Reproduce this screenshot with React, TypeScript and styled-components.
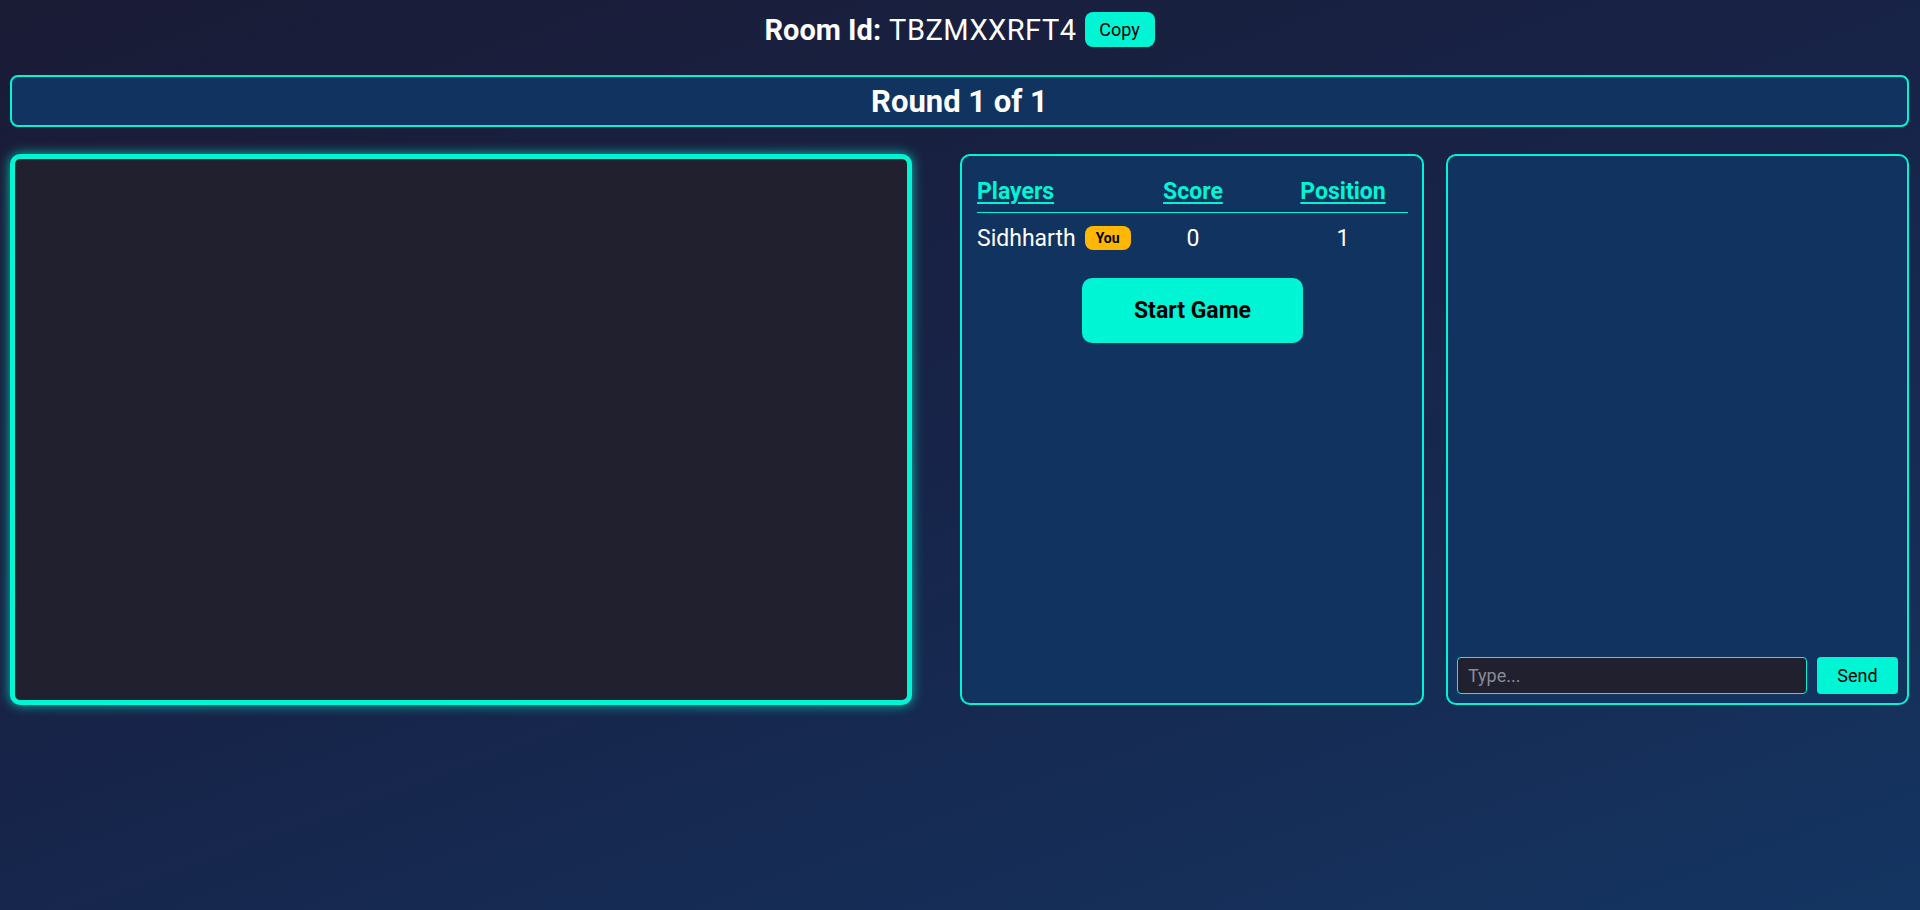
import React from 'react'
import styled, { createGlobalStyle } from 'styled-components'

const cyan = '#00f5d4'
const panelBg = '#10335f'

const GlobalStyle = createGlobalStyle`
  html, body {
    margin: 0;
    padding: 0;
  }
  body {
    min-height: 100vh;
    background: linear-gradient(160deg, #1a1b35 0%, #172449 50%, #143562 100%);
    font-family: Roboto, "Noto Sans", sans-serif;
    color: #fff;
  }
`

const Page = styled.div`
  padding: 0 11px 0 10px;
`

const Header = styled.div`
  display: flex;
  align-items: center;
  justify-content: center;
  gap: 8px;
  padding-top: 12px;
  height: 35px;
`

const RoomLabel = styled.span`
  font-size: 29px;
  font-weight: 700;
`

const RoomId = styled.span`
  font-size: 29px;
  font-weight: 400;
  letter-spacing: 0.5px;
`

const SmallButton = styled.button<{ $w: number; $h: number; $radius: number }>`
  flex: none;
  width: ${({ $w }) => $w}px;
  height: ${({ $h }) => $h}px;
  border-radius: ${({ $radius }) => $radius}px;
  border: none;
  background: ${cyan};
  color: #000;
  font-family: inherit;
  font-size: 18px;
  padding: 0;
  cursor: pointer;
`

const RoundBar = styled.div`
  margin-top: 28px;
  height: 48px;
  border: 2px solid ${cyan};
  border-radius: 8px;
  background: ${panelBg};
  display: flex;
  align-items: center;
  justify-content: center;
  font-size: 31px;
  font-weight: 700;
`

const Main = styled.div`
  margin-top: 27px;
  display: flex;
  height: 551px;
`

const Canvas = styled.div`
  box-sizing: border-box;
  flex: 0 0 902px;
  height: 100%;
  margin-right: 48px;
  border: 5px solid ${cyan};
  border-radius: 10px;
  background: #20202f;
  box-shadow: 0 0 12px rgba(0, 245, 212, 0.75);
`

const Panel = styled.div`
  box-sizing: border-box;
  height: 100%;
  border: 2px solid ${cyan};
  border-radius: 10px;
  background: ${panelBg};
`

const PlayersPanel = styled(Panel)`
  flex: 0 0 464px;
  margin-right: 22px;
  padding: 14px 14px 0 15px;
  display: flex;
  flex-direction: column;
`

const TableRow = styled.div<{ $head?: boolean }>`
  display: grid;
  grid-template-columns: 131px 170px 1fr;
  align-items: center;
  height: ${({ $head }) => ($head ? 42 : 50)}px;
  border-bottom: ${({ $head }) => ($head ? `1px solid ${cyan}` : 'none')};
`

const HeadCell = styled.div<{ $center?: boolean }>`
  color: ${cyan};
  font-size: 23px;
  font-weight: 700;
  text-decoration: underline;
  text-underline-offset: 3px;
  text-align: ${({ $center }) => ($center ? 'center' : 'left')};
`

const Cell = styled.div<{ $center?: boolean }>`
  font-size: 23px;
  display: flex;
  align-items: center;
  gap: 9px;
  white-space: nowrap;
  justify-content: ${({ $center }) => ($center ? 'center' : 'flex-start')};
`

const Badge = styled.span`
  display: inline-flex;
  flex: none;
  align-items: center;
  justify-content: center;
  width: 46px;
  height: 24px;
  border-radius: 8px;
  background: #ffb703;
  color: #000;
  font-size: 14px;
  font-weight: 700;
`

const StartButton = styled.button`
  align-self: center;
  margin-top: 15px;
  width: 221px;
  height: 65px;
  border: none;
  border-radius: 10px;
  background: ${cyan};
  color: #000;
  font-family: inherit;
  font-size: 23px;
  font-weight: 700;
  cursor: pointer;
`

const ChatPanel = styled(Panel)`
  flex: 1;
  display: flex;
  flex-direction: column;
  justify-content: flex-end;
  padding: 9px;
`

const ChatForm = styled.div`
  display: flex;
  gap: 10px;
`

const ChatInput = styled.input`
  flex: 1;
  min-width: 0;
  box-sizing: border-box;
  height: 37px;
  border: 1px solid ${cyan};
  border-radius: 4px;
  background: #20202f;
  color: #fff;
  font-family: inherit;
  font-size: 18px;
  padding: 0 10px;
  outline: none;
  &::placeholder {
    color: #8a8a96;
  }
`

const players = [{ name: 'Sidhharth', score: 0, position: 1, you: true }]

export default function App() {
  return (
    <Page>
      <GlobalStyle />
      <Header>
        <RoomLabel>Room Id:</RoomLabel>
        <RoomId>TBZMXXRFT4</RoomId>
        <SmallButton $w={70} $h={35} $radius={8}>Copy</SmallButton>
      </Header>
      <RoundBar>Round 1 of 1</RoundBar>
      <Main>
        <Canvas />
        <PlayersPanel>
          <TableRow $head>
            <HeadCell>Players</HeadCell>
            <HeadCell $center>Score</HeadCell>
            <HeadCell $center>Position</HeadCell>
          </TableRow>
          {players.map((p) => (
            <TableRow key={p.name}>
              <Cell>
                {p.name}
                {p.you && <Badge>You</Badge>}
              </Cell>
              <Cell $center>{p.score}</Cell>
              <Cell $center>{p.position}</Cell>
            </TableRow>
          ))}
          <StartButton>Start Game</StartButton>
        </PlayersPanel>
        <ChatPanel>
          <ChatForm>
            <ChatInput placeholder="Type..." />
            <SmallButton $w={81} $h={37} $radius={4}>Send</SmallButton>
          </ChatForm>
        </ChatPanel>
      </Main>
    </Page>
  )
}
